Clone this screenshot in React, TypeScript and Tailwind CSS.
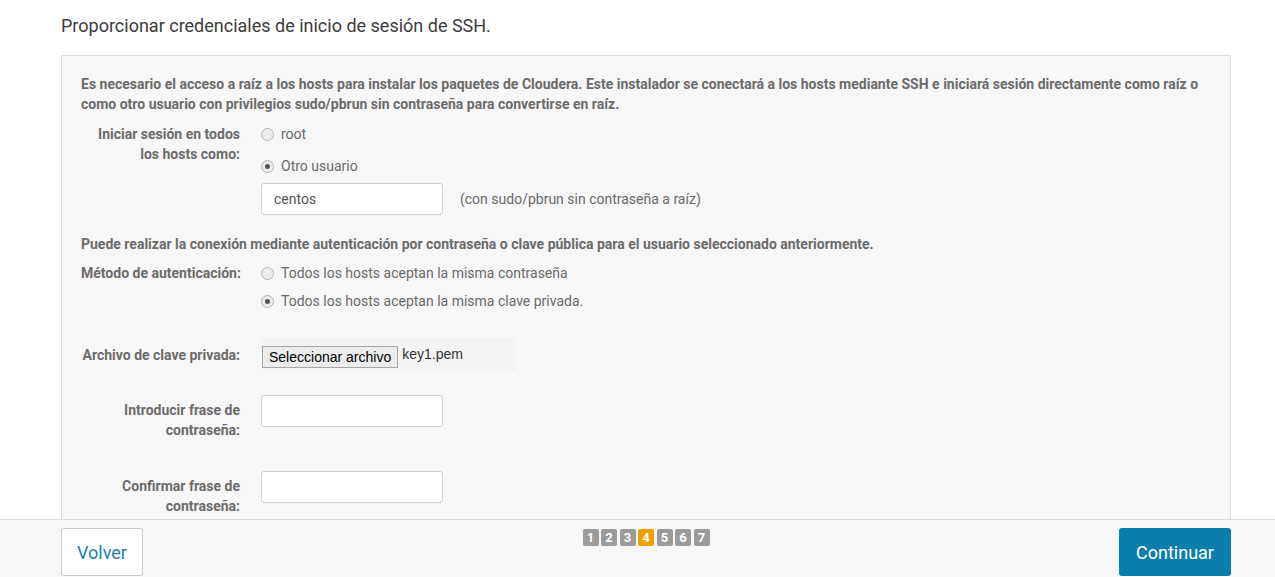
import React from 'react'

function Radio({ label, checked }: { label: string; checked?: boolean }) {
  return (
    <div className="flex h-[20px] items-center">
      <span className="flex h-[13px] w-[13px] items-center justify-center rounded-full border border-[#b5b5b5] bg-[#ececec]">
        {checked && <span className="h-[5px] w-[5px] rounded-full bg-[#555]" />}
      </span>
      <span className="ml-[7px] text-[14px] text-[#6a6a6a]">{label}</span>
    </div>
  )
}

function Label({ children, className = '' }: { children: React.ReactNode; className?: string }) {
  return (
    <div className={`w-[159px] shrink-0 text-right text-[14px] font-bold leading-[20px] text-[#6b6b6b] ${className}`}>
      {children}
    </div>
  )
}

const textInput =
  'h-[32px] w-[182px] rounded-[3px] border border-[#cfcfcf] bg-white px-3 text-[14px] text-[#555] outline-none'

export default function App() {
  const steps = [1, 2, 3, 4, 5, 6, 7]

  return (
    <div className="flex h-[577px] flex-col overflow-hidden bg-white font-['Roboto',sans-serif]">
      <main className="flex-1 overflow-hidden">
        <div className="ml-[61px] w-[1170px]">
          <h1 className="pt-[14px] text-[18px] leading-[24px] text-[#3c3c3c]">
            Proporcionar credenciales de inicio de sesión de SSH.
          </h1>

          <div className="mt-[17px] h-[600px] border border-[#dcdcdc] bg-[#f7f7f7] pl-[19px] pr-4 pt-[18px]">
            <p className="text-[14px] font-bold leading-[20px] text-[#6b6b6b]">
              Es necesario el acceso a raíz a los hosts para instalar los paquetes de Cloudera. Este instalador se conectará a los hosts mediante SSH e iniciará sesión directamente como raíz o como otro usuario con privilegios sudo/pbrun sin contraseña para convertirse en raíz.
            </p>

            {/* login user */}
            <div className="mt-[10px] flex">
              <Label>
                Iniciar sesión en todos
                <br />
                los hosts como:
              </Label>
              <div className="ml-[21px] flex flex-col">
                <Radio label="root" />
                <div className="mt-[12px]">
                  <Radio label="Otro usuario" checked />
                </div>
                <div className="mt-[7px] flex items-center">
                  <input className={textInput} defaultValue="centos" />
                  <span className="ml-[17px] text-[14px] text-[#6a6a6a]">
                    (con sudo/pbrun sin contraseña a raíz)
                  </span>
                </div>
              </div>
            </div>

            <p className="mt-[19px] text-[14px] font-bold leading-[20px] text-[#6b6b6b]">
              Puede realizar la conexión mediante autenticación por contraseña o clave pública para el usuario seleccionado anteriormente.
            </p>

            {/* auth method */}
            <div className="mt-[9px] flex">
              <Label className="whitespace-nowrap">Método de autenticación:</Label>
              <div className="ml-[21px] flex flex-col">
                <Radio label="Todos los hosts aceptan la misma contraseña" />
                <div className="mt-[8px]">
                  <Radio label="Todos los hosts aceptan la misma clave privada." checked />
                </div>
              </div>
            </div>

            {/* private key file */}
            <div className="mt-[27px] flex items-center">
              <Label>Archivo de clave privada:</Label>
              <div className="ml-[21px] flex h-[33px] w-[255px] items-start bg-[#f3f3f3] pl-[1px] pt-[8px]">
                <button className="h-[22px] border border-[#a6a6a6] bg-[#ececec] px-[6px] font-['Liberation_Sans',Arial,sans-serif] text-[14px] leading-[18px] text-black">
                  Seleccionar archivo
                </button>
                <span className="-mt-[1px] ml-[4px] font-['Liberation_Sans',Arial,sans-serif] text-[14px] leading-[18px] text-[#333]">
                  key1.pem
                </span>
              </div>
            </div>

            {/* passphrase */}
            <div className="mt-[24px] flex">
              <Label className="pt-[5px]">
                Introducir frase de
                <br />
                contraseña:
              </Label>
              <div className="ml-[21px]">
                <input type="password" className={textInput} />
              </div>
            </div>

            <div className="mt-[31px] flex">
              <Label className="pt-[5px]">
                Confirmar frase de
                <br />
                contraseña:
              </Label>
              <div className="ml-[21px]">
                <input type="password" className={textInput} />
              </div>
            </div>
          </div>
        </div>
      </main>

      <footer className="h-[58px] shrink-0 border-t border-[#dcdcdc] bg-[#f7f7f7]">
        <div className="ml-[61px] flex w-[1170px] items-start justify-between pt-[8px]">
          <button className="h-[48px] w-[82px] rounded-[3px] border border-[#cccccc] bg-white text-[18px] text-[#1b80ad]">
            Volver
          </button>
          <div className="ml-[30px] mt-[1px] flex gap-[2.5px]">
            {steps.map((s) => (
              <span
                key={s}
                className={`flex h-[17px] w-[16px] items-center justify-center rounded-[2px] text-[13px] font-bold text-white ${
                  s === 4 ? 'bg-[#eea000]' : 'bg-[#9b9b9b]'
                }`}
              >
                {s}
              </span>
            ))}
          </div>
          <button className="h-[48px] w-[112px] rounded-[3px] bg-[#0b7eab] text-[18px] text-white">
            Continuar
          </button>
        </div>
      </footer>
    </div>
  )
}
